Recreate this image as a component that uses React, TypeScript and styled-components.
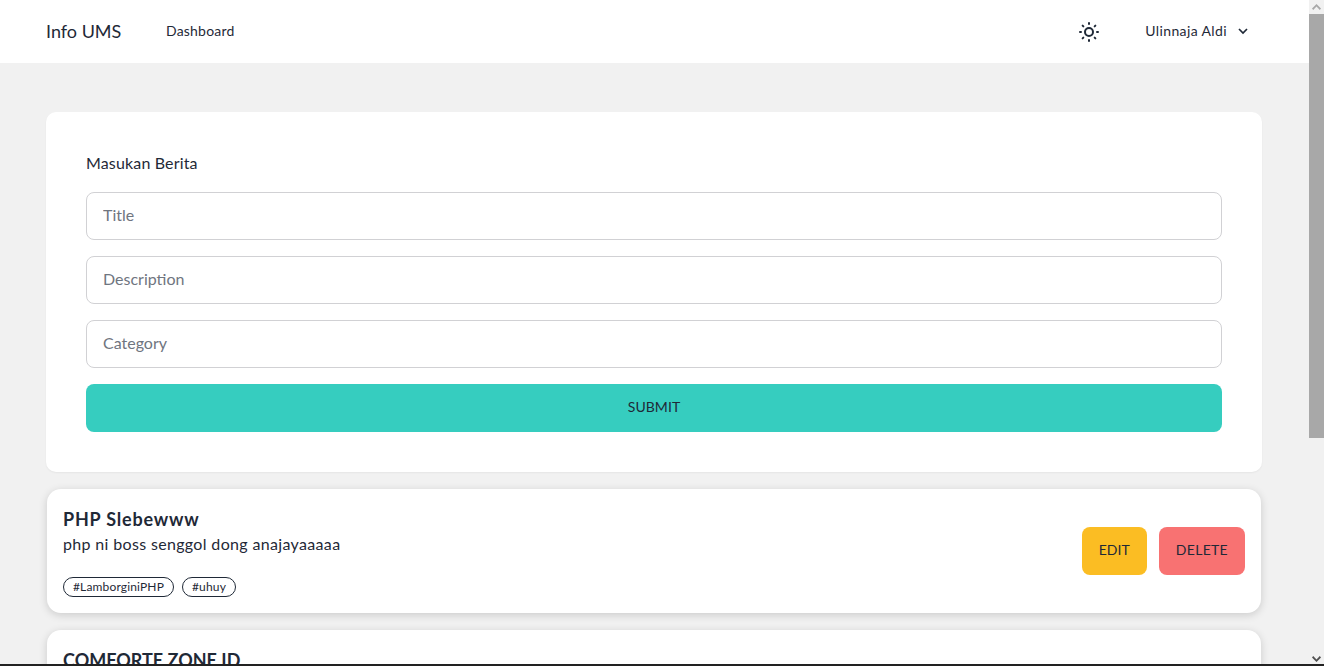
import React from "react";
import styled, { createGlobalStyle } from "styled-components";

const Global = createGlobalStyle`
  html, body { margin: 0; padding: 0; height: 666px; overflow: hidden; background: #f1f1f1; }
  * { box-sizing: border-box; }
  body { font-family: "Lato", "Noto Sans", sans-serif; color: #1f2937; }
  #root { height: 666px; }
`;

const Viewport = styled.div`
  height: 666px;
  display: flex;
  overflow: hidden;
  position: relative;
`;
const Page = styled.div`
  flex: 1;
  min-width: 0;
`;
const Nav = styled.nav`
  height: 63px;
  background: #fff;
  padding: 0 60px 2px 46px;
  display: flex;
  align-items: center;
`;
const Brand = styled.div`
  font-size: 18px;
  width: 120px;
`;
const NavLink = styled.a`
  font-size: 14px;
  letter-spacing: 0.2px;
`;
const NavRight = styled.div`
  margin-left: auto;
  display: flex;
  align-items: center;
`;
const ThemeIcon = styled.svg`
  width: 24px;
  height: 24px;
  margin: 2px 44px 0 0;
  display: block;
`;
const User = styled.div`
  font-size: 14px;
  letter-spacing: 0.38px;
  display: flex;
  align-items: center;
  gap: 10px;
`;
const Main = styled.main`
  padding: 49px 47px 0 46px;
  display: flex;
  flex-direction: column;
  gap: 17px;
`;
const FormCard = styled.form`
  background: #fff;
  border-radius: 10px;
  height: 360px;
  padding: 40px;
  display: flex;
  flex-direction: column;
  gap: 16px;
  box-shadow: 0 1px 2px rgba(0, 0, 0, 0.05);
`;
const FormTitle = styled.div`
  font-size: 16px;
  line-height: 22px;
  margin-bottom: 2px;
  letter-spacing: 0.15px;
`;
const Input = styled.input`
  height: 48px;
  width: 100%;
  flex-shrink: 0;
  border: 1px solid #d1d1d4;
  border-radius: 8px;
  background: #fff;
  padding: 0 16px 3px;
  font: inherit;
  font-size: 16px;
  &::placeholder { color: #6f7580; opacity: 1; }
`;
const Submit = styled.button`
  height: 48px;
  flex-shrink: 0;
  border: 0;
  border-radius: 8px;
  background: #36cdbf;
  color: #1f2937;
  padding: 0 0 3px;
  font: inherit;
  font-size: 14px;
  letter-spacing: 0.05px;
`;
const PostCard = styled.article`
  background: #fff;
  border-radius: 14px;
  margin: 0 1px;
  padding: 16px;
  display: flex;
  align-items: center;
  justify-content: space-between;
  flex-shrink: 0;
  box-shadow: 0 2px 8px rgba(0, 0, 0, 0.16);
`;
const PostBody = styled.div`
  display: flex;
  flex-direction: column;
`;
const PostTitle = styled.h2<{ $tracking?: number }>`
  margin: 0;
  font-size: 18px;
  line-height: 28px;
  font-weight: 700;
  letter-spacing: ${(p) => p.$tracking ?? 0}px;
`;
const PostText = styled.p`
  margin: 0 0 2px;
  font-size: 16px;
  line-height: 22px;
  letter-spacing: 0.34px;
`;
const Tags = styled.div`
  margin-top: 20px;
  display: flex;
  gap: 8px;
`;
const Tag = styled.span`
  height: 20px;
  border: 1px solid #1f2937;
  border-radius: 10px;
  padding: 0 9px;
  font-size: 12px;
  line-height: 18px;
  letter-spacing: 0.15px;
`;
const Actions = styled.div`
  display: flex;
  gap: 12px;
`;
const ActionButton = styled.button<{ $bg: string; $tracking: number }>`
  height: 48px;
  padding: 0 17px 3px;
  border: 0;
  border-radius: 8px;
  background: ${(p) => p.$bg};
  color: #1f2937;
  font: inherit;
  font-size: 14px;
  letter-spacing: ${(p) => p.$tracking}px;
`;
const ScrollTrack = styled.div`
  width: 15px;
  flex-shrink: 0;
  background: #f1f1f1;
  display: flex;
  flex-direction: column;
`;
const ScrollBtn = styled.div`
  height: 14px;
  display: flex;
  align-items: center;
  justify-content: center;
`;
const Thumb = styled.div`
  height: 424px;
  background: #a8a8a8;
`;
const Spacer = styled.div`
  flex: 1;
`;
const BottomLine = styled.div`
  position: absolute;
  left: 0;
  right: 0;
  bottom: 0;
  height: 2px;
  background: #222;
`;

export default function App() {
  return (
    <Viewport>
      <Global />
      <Page>
        <Nav>
          <Brand>Info UMS</Brand>
          <NavLink>Dashboard</NavLink>
          <NavRight>
            <ThemeIcon viewBox="0 0 24 24" fill="none" stroke="#1f2937" strokeWidth="2" strokeLinecap="round" strokeLinejoin="round">
              <path d="M12 3v1m0 16v1m9-9h-1M4 12H3m15.364 6.364l-.707-.707M6.343 6.343l-.707-.707m12.728 0l-.707.707M6.343 17.657l-.707.707M16 12a4 4 0 11-8 0 4 4 0 018 0z" />
            </ThemeIcon>
            <User>
              Ulinnaja Aldi
              <svg width="12" height="12" viewBox="0 0 12 12" fill="none" stroke="#1f2937" strokeWidth="1.7">
                <path d="M2 4l4 4 4-4" />
              </svg>
            </User>
          </NavRight>
        </Nav>
        <Main>
          <FormCard>
            <FormTitle>Masukan Berita</FormTitle>
            <Input placeholder="Title" />
            <Input placeholder="Description" />
            <Input placeholder="Category" />
            <Submit type="button">SUBMIT</Submit>
          </FormCard>
          <PostCard>
            <PostBody>
              <PostTitle $tracking={0.8}>PHP Slebewww</PostTitle>
              <PostText>php ni boss senggol dong anajayaaaaa</PostText>
              <Tags>
                <Tag>#LamborginiPHP</Tag>
                <Tag>#uhuy</Tag>
              </Tags>
            </PostBody>
            <Actions>
              <ActionButton $bg="#fbbd23" $tracking={0.05}>EDIT</ActionButton>
              <ActionButton $bg="#f87272" $tracking={0.3}>DELETE</ActionButton>
            </Actions>
          </PostCard>
          <PostCard>
            <PostBody>
              <PostTitle>COMFORTE ZONE ID</PostTitle>
            </PostBody>
          </PostCard>
        </Main>
      </Page>
      <ScrollTrack>
        <ScrollBtn>
          <svg width="9" height="6" viewBox="0 0 9 6" fill="#a8a8a8"><path d="M4.5 0L9 4.5 7.8 6 4.5 2.6 1.2 6 0 4.5z" /></svg>
        </ScrollBtn>
        <Thumb />
        <Spacer />
        <ScrollBtn>
          <svg width="9" height="6" viewBox="0 0 9 6" fill="#505050"><path d="M4.5 6L9 1.5 7.8 0 4.5 3.4 1.2 0 0 1.5z" /></svg>
        </ScrollBtn>
      </ScrollTrack>
      <BottomLine />
    </Viewport>
  );
}
